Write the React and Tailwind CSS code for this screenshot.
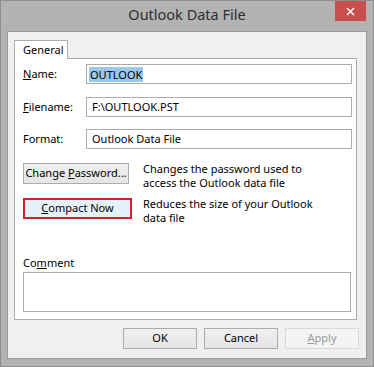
export default function App() {
  const font = { fontFamily: '"Noto Sans", "Open Sans", sans-serif' };
  const btn =
    "h-[21px] flex items-center justify-center border border-[#acacac] bg-gradient-to-b from-[#f0f0f0] to-[#e5e5e5] text-[11px] text-black";
  return (
    <div
      className="w-[374px] h-[367px] bg-[#b3b3b3] border border-[#8e8e8e] flex flex-col"
      style={font}
    >
      {/* title bar */}
      <div className="h-[30px] flex items-start shrink-0">
        <div className="w-[31px] ml-[7px]" />
        <div className="flex-1 text-center text-[14.5px] text-[#2e2e2e] pt-[3px] leading-[20px]">
          Outlook Data File
        </div>
        <div className="w-[31px] h-[20px] mr-[7px] bg-[#c7504f] flex items-center justify-center">
          <svg width="9" height="9" viewBox="0 0 9 9">
            <path d="M1 1 L8 8 M8 1 L1 8" stroke="#fff" strokeWidth="1.6" />
          </svg>
        </div>
      </div>
      {/* client area */}
      <div className="mx-[6px] flex-1 mb-[7px] bg-[#f0f0f0] border border-[#9a9a9a] flex flex-col pt-[8px] pl-[6px] pr-[9px]">
        {/* tab strip */}
        <div className="flex h-[18px] relative z-10">
          <div className="w-[54px] h-[19px] border border-b-0 border-[#acacac] bg-white text-[11px] leading-[17px] pl-[8px] text-black">
            General
          </div>
        </div>
        {/* panel */}
        <div className="h-[262px] border border-[#acacac] bg-white flex flex-col pt-[5px] pl-[8px] pr-[4px] text-[11px] text-black">
          <div className="flex items-center h-[20px]">
            <div className="w-[63px]">
              <span className="underline">N</span>ame:
            </div>
            <div className="flex-1 h-[20px] border border-[#acacac] bg-white flex items-center pl-[2px]">
              <span className="bg-[#99c9ef] px-[1px] leading-[15px]">OUTLOOK</span>
            </div>
          </div>
          <div className="flex items-center h-[20px] mt-[13px]">
            <div className="w-[63px]">
              <span className="underline">F</span>ilename:
            </div>
            <div className="flex-1 h-[20px] border border-[#acacac] bg-white flex items-center pl-[5px]">
              F:\OUTLOOK.PST
            </div>
          </div>
          <div className="flex items-center h-[20px] mt-[12px]">
            <div className="w-[63px]">Format:</div>
            <div className="flex-1 h-[20px] border border-[#acacac] bg-white flex items-center pl-[5px]">
              Outlook Data File
            </div>
          </div>
          <div className="flex items-start mt-[14px]">
            <div className="w-[120px] shrink-0">
              <div className={btn + " w-[106px]"}>
                Change&nbsp;<span className="underline">P</span>assword...
              </div>
            </div>
            <div className="leading-[14px] mt-[-1px]">
              Changes the password used to
              <br />
              access the Outlook data file
            </div>
          </div>
          <div className="flex items-start mt-[8px]">
            <div className="w-[120px] shrink-0">
              <div className="w-[109px] h-[21px] border-2 border-[#d3222e] bg-[#e5f1fb] flex items-center justify-center">
                <span className="underline">C</span>ompact Now
              </div>
            </div>
            <div className="leading-[14px] mt-[-1px]">
              Reduces the size of your Outlook
              <br />
              data file
            </div>
          </div>
          <div className="mt-[30px] leading-[16px]">
            Co<span className="underline">m</span>ment
          </div>
          <div className="mt-[1px] h-[40px] border border-[#acacac] bg-white mr-[1px]" />
        </div>
        {/* bottom buttons */}
        <div className="flex justify-end gap-[7px] mt-[8px] mr-[-2px]">
          <div className={btn + " w-[74px]"}>OK</div>
          <div className={btn + " w-[74px]"}>Cancel</div>
          <div className="w-[74px] h-[21px] flex items-center justify-center border border-[#d9d9d9] bg-[#f4f4f4] text-[11px] text-[#9a9a9a]">
            <span className="underline">A</span>pply
          </div>
        </div>
      </div>
    </div>
  );
}
